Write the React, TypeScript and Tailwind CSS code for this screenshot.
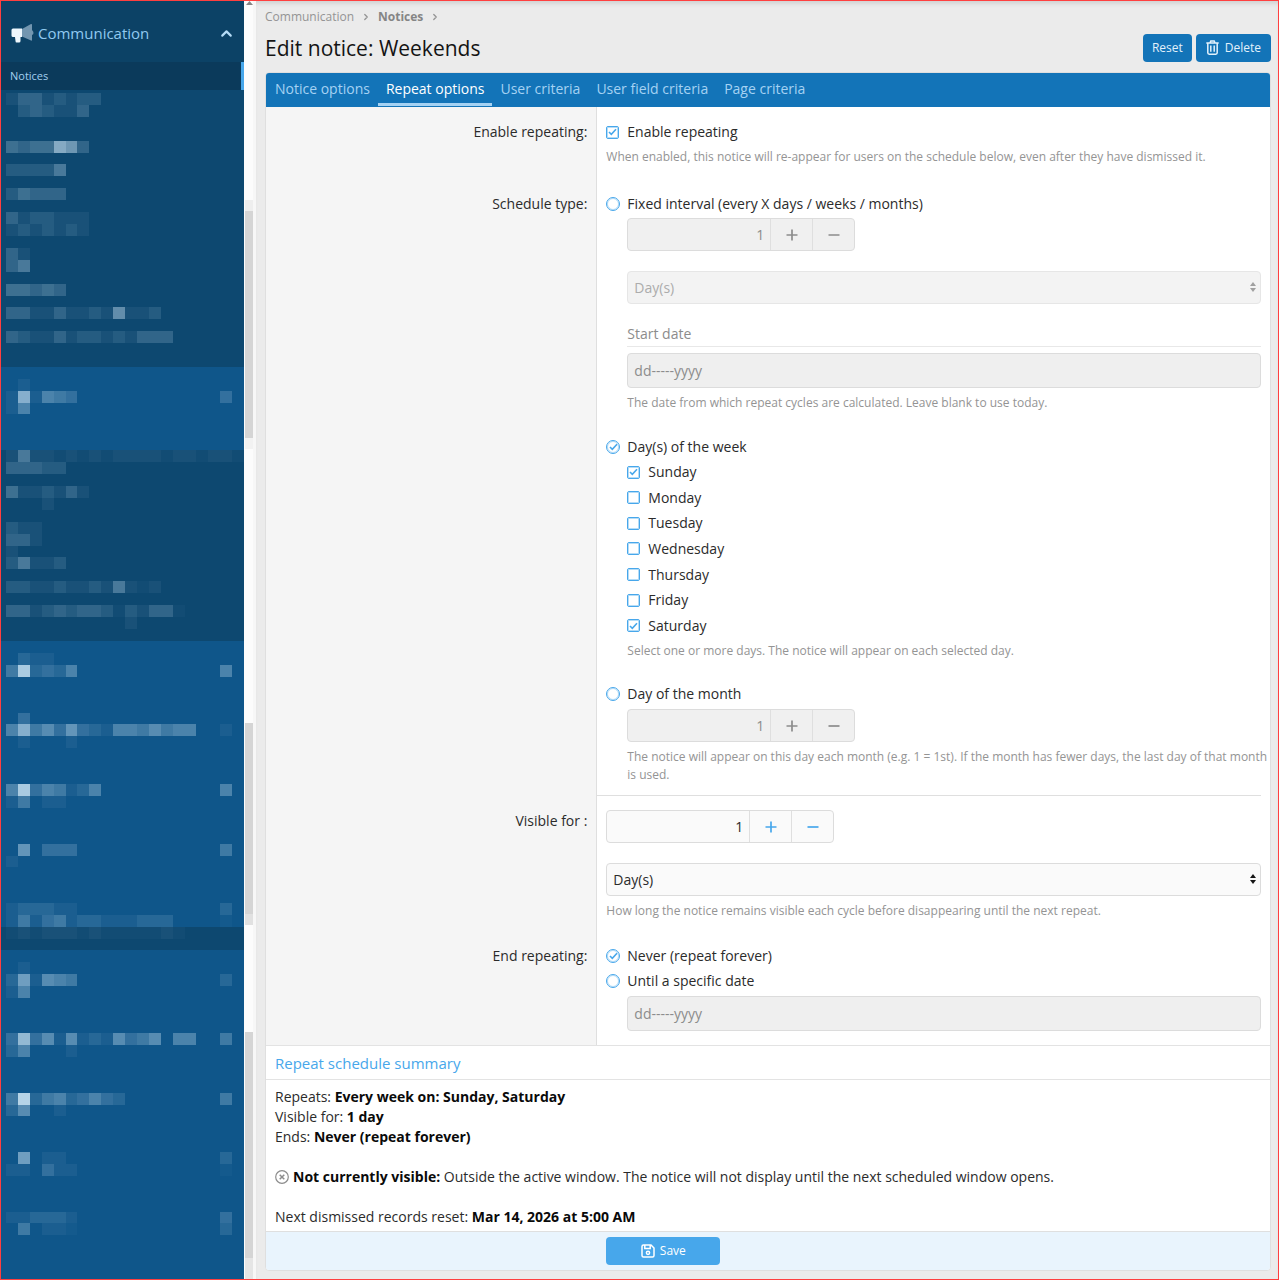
import { useState } from "react";
import type { ReactNode } from "react";
import { ChevronRight, ChevronUp } from "lucide-react";

// Blurred-out menu entries, one string per line, one hex digit of brightness per cell
const blurredSections = [
  {
    className: "bg-[#0d4870] pt-[3px]",
    svg: "h-[274px]",
    rows: [
      "13312122", ".232113", "", "", "4344a83", "", "22225", "", "24333", "", "3122111", "1212121", "",
      "31", "35", "", "44343", "", "3311311217112", "", "32113122121333", "", "",
    ],
  },
  {
    className: "bg-[#0f568a]",
    svg: "h-[83px]",
    rows: ["", ".1", "1a1543............3", "15", "", "", ""],
  },
  {
    className: "bg-[#0d4870]",
    svg: "h-[191px]",
    rows: [
      "15110101011110110110", "33322", "", "4112131", "...1", "", "211", "331", "1", "25112", "",
      "2211211215101", "", "331232332021330", "..........1", "",
    ],
  },
  {
    className: "bg-[#0f568a]",
    svg: "h-[286px]",
    rows: [
      "", ".211", "4d2325............5", "", "", "", ".3", "5a46373215546455..1", ".1...1", "", "", "",
      "5d354125..........5", "14.11", "", "", "", ".7.333............4", "1", "", "", "",
      "122211............2", "14134122111222....0",
    ],
  },
  {
    className: "bg-[#0d4870]",
    svg: "h-[23px]",
    rows: ["010111010000010", ""],
  },
  {
    className: "flex-1 bg-[#0f568a]",
    svg: "h-[321px]",
    rows: [
      "", ".1", "281654............2", "15", "", "", "", "3b36161216346.55..4", "25...1", "", "", "",
      "4e24523532........4", "26..1", "", "", "", ".8.11.............2", "11.311............0", "", "", "",
      "112221............3", ".4.110............2", "", "", "",
    ],
  },
];

const tabs = ["Notice options", "Repeat options", "User criteria", "User field criteria", "Page criteria"];

const weekdays = ["Sunday", "Monday", "Tuesday", "Wednesday", "Thursday", "Friday", "Saturday"];

function BlurredRows({ rows, className }: { rows: string[]; className: string }) {
  return (
    <svg
      className={`block w-full ${className}`}
      viewBox={`0 0 20 ${rows.length}`}
      preserveAspectRatio="none"
      shapeRendering="crispEdges"
      aria-hidden="true"
    >
      {rows.map((row, y) =>
        row.split("").map((cell, x) =>
          cell === "." ? null : (
            <rect
              key={`${x}-${y}`}
              x={x}
              y={y}
              width={1}
              height={1}
              fill="#cfe6f5"
              opacity={cell === "0" ? 0.03 : parseInt(cell, 16) / 16}
            />
          )
        )
      )}
    </svg>
  );
}

function Bullhorn() {
  return (
    <svg width="23" height="20" viewBox="0 0 23 20" aria-hidden="true">
      <path d="M11 6 L20 1 Q21 .6 21 2 V17 Q21 18 20 17.6 L11 13.5 Z" fill="#7396b0" />
      <path d="M21 7 Q22.5 8.5 22.5 10 Q22.5 11.500 21 12 Z" fill="#7396b0" />
      <path d="M2 5.500 H11 V14 H9.500 V18 Q9.500 19.500 8 19.500 H5.500 Q4.500 19.500 4.500 18 L4 14 H2 Q.5 14 .5 12.500 V7 Q.5 5.500 2 5.500 Z" fill="#eef7fd" />
    </svg>
  );
}

function Sidebar() {
  return (
    <aside className="flex w-[243px] shrink-0 flex-col bg-[#0c4266]">
      <button type="button" className="flex h-[61px] items-center pl-[10px] pr-[9px] pt-[3px] text-[#90c9f0]">
        <Bullhorn />
        <span className="ml-[4px] flex-1 text-left text-[15px]">Communication</span>
        <ChevronUp size={17} strokeWidth={3} className="text-[#b5dcf7]" />
      </button>
      <a href="#notices" className="flex h-[28px] items-center border-r-[3px] border-[#47a7eb] bg-[#0b3a5b] pl-[9px] text-[11px] text-[#a3d0f0]">
        Notices
      </a>
      {blurredSections.map((section, index) => (
        <div key={index} className={`pl-[5px] ${section.className}`}>
          <BlurredRows rows={section.rows} className={section.svg} />
        </div>
      ))}
    </aside>
  );
}

function ScrollTrack() {
  return (
    <div className="flex w-[12px] shrink-0 flex-col border-r-[3px] border-[#f7f7f7] bg-[#fcfcfc] pl-[1px]" aria-hidden="true">
      <svg className="mx-auto" width="7" height="4" viewBox="0 0 7 4">
        <path d="M3.500 0 L7 4 H0 Z" fill="#858585" />
      </svg>
      <div className="mt-[195px] h-[11px] bg-[#eeeeee]" />
      <div className="h-[227px] bg-[#d5d5d5]" />
      <div className="h-[11px] bg-[#f2f2f2]" />
      <div className="mt-[274px] h-[191px] bg-[#d5d5d5]" />
      <div className="h-[11px] bg-[#e1e1e1]" />
      <div className="mt-[107px] h-[226px] bg-[#d5d5d5]" />
      <div className="flex-1 bg-[#e5e5e5]" />
    </div>
  );
}

function FormRow({ label, className = "", children }: { label: string; className?: string; children: ReactNode }) {
  return (
    <div className="flex">
      <div className="w-[33%] shrink-0 border-r border-[#dfdfdf] bg-[#f5f5f5] pr-[9px] pt-[15px] text-right">{label}</div>
      <div className={`min-w-0 flex-1 pl-[9px] pr-[9px] ${className}`}>{children}</div>
    </div>
  );
}

function Hint({ className = "", children }: { className?: string; children: ReactNode }) {
  return <p className={`mt-[6px] text-[12px] leading-[18px] text-[#949494] ${className}`}>{children}</p>;
}

function Check({ type, name, checked, onChange, children }: {
  type: "checkbox" | "radio";
  name: string;
  checked: boolean;
  onChange: () => void;
  children: ReactNode;
}) {
  return (
    <label className="flex h-[20px] items-center">
      <span className="relative flex w-[14px] items-center">
        <input
          type={type}
          name={name}
          checked={checked}
          onChange={onChange}
          className={
            type === "radio"
              ? "h-[14px] w-[14px] appearance-none rounded-full border border-[#47a7eb] outline outline-[#47a7eb]/40 -outline-offset-2"
              : "h-[13px] w-[13px] appearance-none rounded-[2px] border border-[#47a7eb] outline outline-[#47a7eb]/40 -outline-offset-2"
          }
        />
        {checked && (
          <svg
            className={type === "radio" ? "pointer-events-none absolute left-[3px]" : "pointer-events-none absolute left-[2px]"}
            width="9"
            height="8"
            viewBox="0 0 9 8"
            fill="none"
            stroke="#47a7eb"
            strokeWidth="1.6"
          >
            <path d="M1 4 L3.300 6.300 L8 1.300" />
          </svg>
        )}
      </span>
      <span className="ml-[7px]">{children}</span>
    </label>
  );
}

function NumberBox({ label, disabled = false }: { label: string; disabled?: boolean }) {
  const [value, setValue] = useState(1);
  const button = "flex w-[42px] items-center justify-center border-l border-[#dfdfdf]";

  return (
    <div
      className={
        disabled
          ? "flex h-[33px] w-[228px] rounded-[4px] border border-[#dcdcdc] bg-[#f0f0f0] text-[#8c8c8c]"
          : "flex h-[33px] w-[228px] rounded-[4px] border border-[#dcdcdc] bg-[#fafafa] text-[#47a7eb]"
      }
    >
      <input
        type="text"
        aria-label={label}
        disabled={disabled}
        value={value}
        onChange={(e) => setValue(Number(e.target.value) || 0)}
        className="w-[142px] bg-transparent pr-[6px] text-right text-[#2b2b2b] disabled:text-[#8c8c8c]"
      />
      <button type="button" aria-label="Increase" disabled={disabled} className={button} onClick={() => setValue(value + 1)}>
        <svg width="12" height="12" viewBox="0 0 12 12" stroke="currentColor" strokeWidth="1.700">
          <path d="M6 .5 V11.500 M.5 6 H11.500" />
        </svg>
      </button>
      <button type="button" aria-label="Decrease" disabled={disabled} className={button} onClick={() => setValue(value - 1)}>
        <svg width="12" height="12" viewBox="0 0 12 12" stroke="currentColor" strokeWidth="1.700">
          <path d="M.5 6 H11.500" />
        </svg>
      </button>
    </div>
  );
}

function UnitSelect({ label, disabled = false }: { label: string; disabled?: boolean }) {
  return (
    <div className="relative mt-[20px]">
      <select
        aria-label={label}
        disabled={disabled}
        className="block h-[33px] w-full appearance-none rounded-[4px] border border-[#dcdcdc] bg-[#fafafa] pl-[6px] text-[#2b2b2b] disabled:border-[#e6e6e6] disabled:bg-[#f3f3f3] disabled:text-[#acacac] disabled:opacity-100"
      >
        <option>Day(s)</option>
        <option>Week(s)</option>
        <option>Month(s)</option>
      </select>
      <svg
        className={disabled ? "pointer-events-none absolute right-[5px] top-[11px] text-[#a0a0a0]" : "pointer-events-none absolute right-[5px] top-[11px] text-[#141414]"}
        width="6"
        height="10"
        viewBox="0 0 6 10"
        fill="currentColor"
      >
        <path d="M3 0 L6 4 H0 Z M3 10 L0 6 H6 Z" />
      </svg>
    </div>
  );
}

function DateBox({ label }: { label: string }) {
  return (
    <input
      type="text"
      aria-label={label}
      disabled
      defaultValue="dd-----yyyy"
      className="block h-[35px] w-full rounded-[4px] border border-[#dcdcdc] bg-[#efefef] pl-[6px] text-[#8c8c8c]"
    />
  );
}

export default function App() {
  const [enabled, setEnabled] = useState(true);
  const [schedule, setSchedule] = useState("week");
  const [days, setDays] = useState(["Sunday", "Saturday"]);
  const [end, setEnd] = useState("never");

  const toggleDay = (day: string) =>
    setDays(days.includes(day) ? days.filter((d) => d !== day) : [...days, day]);

  return (
    <div className="flex min-h-screen border border-[#ff3f3f] bg-[#ebebeb] font-['Open_Sans','Noto_Sans',sans-serif] text-[14px] leading-[20px] text-[#2b2b2b]">
      <Sidebar />
      <ScrollTrack />

      <main className="min-w-0 flex-1 pb-[7px] pl-[9px] pr-[7px] shadow-[inset_0_5px_5px_-3px_#cccccc]">
        {/* Breadcrumb */}
        <nav className="flex items-center pt-[7px] text-[12px] leading-[18px] text-[#949494]">
          <a href="#communication">Communication</a>
          <ChevronRight size={10} strokeWidth={3} className="mx-[7px]" />
          <a href="#notices" className="font-bold text-[#858585]">Notices</a>
          <ChevronRight size={10} strokeWidth={3} className="mx-[7px]" />
        </nav>

        {/* Title */}
        <header className="mb-[3px] flex h-[43px] items-center justify-between">
          <h1 className="text-[21px] leading-[28px] text-[#141414]">Edit notice: Weekends</h1>
          <div className="flex gap-[4px] text-[12px] text-[#e3f1fb]">
            <button type="button" className="h-[28px] rounded-[4px] bg-[#1374b8] px-[9px]">Reset</button>
            <button type="button" className="flex h-[28px] items-center gap-[6px] rounded-[4px] bg-[#1374b8] px-[10px]">
              <svg width="13" height="15" viewBox="0 0 13 15" fill="none" stroke="currentColor" strokeWidth="1.500">
                <path d="M.3 3 H12.700 M4 3 L4.800 1 H8.200 L9 3 M1.800 3 V12.800 Q1.800 14.200 3.200 14.200 H9.800 Q11.200 14.200 11.200 12.800 V3 M4.800 5.500 V11.800 M8.200 5.500 V11.800" />
              </svg>
              Delete
            </button>
          </div>
        </header>

        <form className="overflow-hidden rounded-[4px] border border-[#dfdfdf] bg-white" onSubmit={(e) => e.preventDefault()}>
          {/* Tabs */}
          <div role="tablist" className="-mx-px -mt-px flex h-[35px] bg-[#1374b8] pl-[2px] text-[#a5d2f3]">
            {tabs.map((tab) => (
              <button
                key={tab}
                type="button"
                role="tab"
                aria-selected={tab === "Repeat options"}
                className={
                  tab === "Repeat options"
                    ? "h-[34px] border-b-[3px] border-[#a5d2f3] px-[8px] pt-[2px] text-white"
                    : "h-[34px] border-b-[3px] border-transparent px-[8px] pt-[2px]"
                }
              >
                {tab}
              </button>
            ))}
          </div>

          <FormRow label="Enable repeating:" className="pb-[13px] pt-[15px]">
            <Check type="checkbox" name="enabled" checked={enabled} onChange={() => setEnabled(!enabled)}>
              Enable repeating
            </Check>
            <Hint>When enabled, this notice will re-appear for users on the schedule below, even after they have dismissed it.</Hint>
          </FormRow>

          <FormRow label="Schedule type:" className="pt-[15px]">
            <Check type="radio" name="schedule" checked={schedule === "interval"} onChange={() => setSchedule("interval")}>
              Fixed interval (every X days / weeks / months)
            </Check>
            <div className="mt-[4px] pl-[21px]">
              <NumberBox label="Interval" disabled={schedule !== "interval"} />
              <UnitSelect label="Interval unit" disabled={schedule !== "interval"} />
              <div className="mb-[6px] mt-[20px] border-b border-[#e8e8e8] pb-[2px] text-[#8c8c8c]">Start date</div>
              <DateBox label="Start date" />
              <Hint>The date from which repeat cycles are calculated. Leave blank to use today.</Hint>
            </div>

            <div className="mt-[25px]">
              <Check type="radio" name="schedule" checked={schedule === "week"} onChange={() => setSchedule("week")}>
                Day(s) of the week
              </Check>
            </div>
            <div className="mt-[5px] pl-[21px]">
              <div className="flex h-[174px] flex-col justify-between">
                {weekdays.map((day) => (
                  <Check key={day} type="checkbox" name={day} checked={days.includes(day)} onChange={() => toggleDay(day)}>
                    {day}
                  </Check>
                ))}
              </div>
              <Hint>Select one or more days. The notice will appear on each selected day.</Hint>
            </div>

            <div className="mt-[24px]">
              <Check type="radio" name="schedule" checked={schedule === "month"} onChange={() => setSchedule("month")}>
                Day of the month
              </Check>
            </div>
            <div className="mt-[5px] pl-[21px]">
              <NumberBox label="Day of the month" disabled={schedule !== "month"} />
              <Hint className="-mr-[9px]">
                The notice will appear on this day each month (e.g. 1 = 1st). If the month has fewer days, the last day of that month is used.
              </Hint>
            </div>
            <hr className="-ml-[9px] mt-[11px] border-[#dfdfdf]" />
          </FormRow>

          <FormRow label="Visible for :" className="pb-[11px] pt-[14px]">
            <NumberBox label="Visible for" />
            <UnitSelect label="Visible for unit" />
            <Hint>How long the notice remains visible each cycle before disappearing until the next repeat.</Hint>
          </FormRow>

          <FormRow label="End repeating:" className="pb-[14px] pt-[15px]">
            <Check type="radio" name="end" checked={end === "never"} onChange={() => setEnd("never")}>
              Never (repeat forever)
            </Check>
            <div className="mt-[5px]">
              <Check type="radio" name="end" checked={end === "date"} onChange={() => setEnd("date")}>
                Until a specific date
              </Check>
            </div>
            <div className="mt-[5px] pl-[21px]">
              <DateBox label="End date" />
            </div>
          </FormRow>

          {/* Summary */}
          <h2 className="border-b border-t border-[#e3e3e3] px-[9px] pb-[5px] pt-[7px] text-[15px] leading-[21px] text-[#47a7eb]">
            Repeat schedule summary
          </h2>
          <div className="px-[9px] pb-[4px] pt-[7px] [&_strong]:font-bold [&_strong]:text-[#0a0a0a]">
            <p>Repeats: <strong>Every week on: Sunday, Saturday</strong></p>
            <p>Visible for: <strong>1 day</strong></p>
            <p>Ends: <strong>Never (repeat forever)</strong></p>
            <p className="mt-[20px] flex items-center">
              <svg className="mr-[4px]" width="14" height="14" viewBox="0 0 14 14" fill="none" stroke="#8c8c8c" strokeWidth="1.200">
                <circle cx="7" cy="7" r="6.300" />
                <path d="M4.700 4.700 L9.300 9.300 M9.300 4.700 L4.700 9.300" strokeWidth="1.500" />
              </svg>
              <span>
                <strong>Not currently visible:</strong> Outside the active window. The notice will not display until the next scheduled window opens.
              </span>
            </p>
            <p className="mt-[20px]">Next dismissed records reset: <strong>Mar 14, 2026 at 5:00 AM</strong></p>
          </div>

          {/* Submit row */}
          <div className="flex border-t border-[#dfdfdf] bg-[#e9f4fd] py-[5px]">
            <div className="w-[33%] shrink-0" />
            <button type="submit" className="ml-[9px] flex h-[28px] w-[114px] items-center justify-center gap-[5px] rounded-[4px] bg-[#47a7eb] text-[12px] text-white">
              <svg width="14" height="14" viewBox="0 0 14 14" fill="none" stroke="currentColor" strokeWidth="1.500">
                <path d="M1 2.500 Q1 1 2.500 1 H10 L13 4 V11.500 Q13 13 11.500 13 H2.500 Q1 13 1 11.500 Z M3.800 1 V4.500 H9.200 V1" />
                <circle cx="7" cy="8.800" r="1.600" />
              </svg>
              Save
            </button>
          </div>
        </form>
      </main>
    </div>
  );
}
